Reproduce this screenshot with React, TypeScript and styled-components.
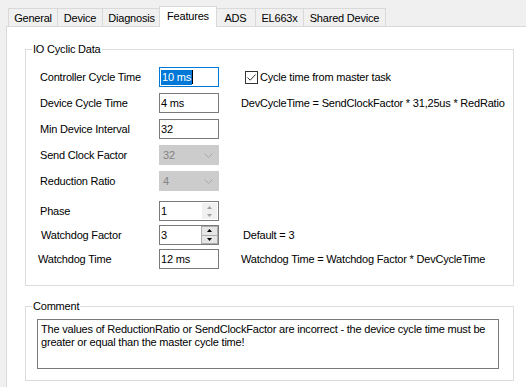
import styled, { createGlobalStyle } from 'styled-components';

const GlobalStyle = createGlobalStyle`
  html, body { margin: 0; padding: 0; }
  body {
    background: #f0f0f0;
    font-family: 'Liberation Sans', Arial, sans-serif;
    font-size: 11px;
    letter-spacing: -0.2px;
    color: #000;
  }
`;

const Window = styled.div`
  width: 526px;
  height: 387px;
  overflow: hidden;
  box-sizing: border-box;
  padding: 6px 0 0 6px;
  display: flex;
  flex-direction: column;
`;

const TabStrip = styled.div`
  display: flex;
  align-items: flex-end;
  height: 20px;
  padding-left: 2px;
`;

const Tab = styled.div<{ $w: number; $active?: boolean }>`
  position: relative;
  z-index: ${(p) => (p.$active ? 2 : 1)};
  box-sizing: border-box;
  width: ${(p) => (p.$active ? p.$w + 2 : p.$w)}px;
  height: ${(p) => (p.$active ? 21 : 18)}px;
  margin: ${(p) => (p.$active ? '0 -2px -1px -1px' : '0 -1px 0 0')};
  padding-bottom: ${(p) => (p.$active ? 3 : 0)}px;
  border: 1px solid #d9d9d9;
  border-bottom: none;
  background: ${(p) => (p.$active ? '#fff' : '#f0f0f0')};
  display: flex;
  align-items: center;
  justify-content: center;
  white-space: nowrap;
`;

const Panel = styled.div`
  flex: 1;
  background: #fff;
  border-top: 1px solid #d9d9d9;
  border-left: 1px solid #d9d9d9;
  padding: 16px 12px 0 18px;
  display: flex;
  flex-direction: column;
  gap: 14px;
`;

const Group = styled.fieldset<{ $pad: string }>`
  margin: 0;
  padding: ${(p) => p.$pad};
  border: 1px solid #dcdcdc;
  min-width: 0;
`;

const Legend = styled.legend`
  margin-left: 6px;
  padding: 0 1px;
  line-height: 13px;
`;

const Rows = styled.div`
  display: flex;
  flex-direction: column;
`;

const Row = styled.div<{ $gap: number }>`
  display: flex;
  align-items: center;
  height: 20px;
  margin-top: ${(p) => p.$gap}px;
`;

const Label = styled.span<{ $indent: number }>`
  flex: none;
  box-sizing: border-box;
  width: 133px;
  padding-left: ${(p) => p.$indent}px;
  white-space: nowrap;
`;

const TextBox = styled.div<{ $focused?: boolean }>`
  flex: none;
  box-sizing: border-box;
  width: 60px;
  height: 20px;
  border: 1px solid ${(p) => (p.$focused ? '#0078d7' : '#7a7a7a')};
  background: #fff;
  padding-left: 1px;
  display: flex;
  align-items: center;
`;

const Selected = styled.span`
  background: #0078d7;
  color: #fff;
  line-height: 15px;
  padding: 0 1px;
`;

const Caret = styled.span`
  width: 1px;
  height: 14px;
  background: #000;
`;

const Combo = styled.div`
  flex: none;
  box-sizing: border-box;
  width: 60px;
  height: 20px;
  border: 1px solid #cccccc;
  background: #cccccc;
  color: #838383;
  padding: 0 5px 0 3px;
  display: flex;
  align-items: center;
  justify-content: space-between;
`;

const Spin = styled.div`
  flex: none;
  box-sizing: border-box;
  width: 60px;
  height: 20px;
  border: 1px solid #7a7a7a;
  background: #fff;
  display: flex;
  align-items: stretch;
`;

const SpinValue = styled.span`
  flex: 1;
  padding-left: 1px;
  display: flex;
  align-items: center;
`;

const SpinButtons = styled.div<{ $enabled?: boolean }>`
  width: 17px;
  display: flex;
  flex-direction: column;
  gap: ${(p) => (p.$enabled ? 0 : 1)}px;
  padding: ${(p) => (p.$enabled ? 0 : 1)}px;
  box-sizing: border-box;
`;

const SpinButton = styled.div<{ $enabled?: boolean }>`
  flex: 1;
  display: flex;
  align-items: center;
  justify-content: center;
  background: ${(p) => (p.$enabled ? '#e5e5e5' : '#f0f0f0')};
  border: 1px solid ${(p) => (p.$enabled ? '#adadad' : '#f0f0f0')};
  color: ${(p) => (p.$enabled ? '#000' : '#a0a0a0')};
  & + & {
    margin-top: ${(p) => (p.$enabled ? -1 : 0)}px;
  }
`;

const Side = styled.div<{ $offset: number }>`
  margin-left: ${(p) => p.$offset}px;
  display: flex;
  align-items: center;
  gap: 2px;
  white-space: nowrap;
`;

const CheckBox = styled.span`
  box-sizing: border-box;
  width: 13px;
  height: 13px;
  border: 1px solid #333;
  background: #fff;
  display: flex;
  align-items: center;
  justify-content: center;
`;

const CommentBox = styled.div`
  box-sizing: border-box;
  margin: 6px 0 0 11px;
  width: 462px;
  height: 50px;
  border: 1px solid #7a7a7a;
  padding: 3px 2px 0 3px;
  line-height: 13px;
`;

const Chevron = () => (
  <svg width="9" height="5" viewBox="0 0 9 5">
    <path d="M0.5 0.5 L4.5 4.5 L8.5 0.5" fill="none" stroke="#a8a8a8" strokeWidth="1" />
  </svg>
);

const Arrow = ({ up }: { up?: boolean }) => (
  <svg width="5" height="3" viewBox="0 0 5 3">
    <path d={up ? 'M0 3 L2.5 0 L5 3 Z' : 'M0 0 L2.5 3 L5 0 Z'} fill="currentColor" />
  </svg>
);

const tabs = [
  { name: 'General', w: 50 },
  { name: 'Device', w: 46 },
  { name: 'Diagnosis', w: 59 },
  { name: 'Features', w: 56, active: true },
  { name: 'ADS', w: 41 },
  { name: 'EL663x', w: 49 },
  { name: 'Shared Device', w: 83 },
];

function SpinBox({ value, enabled }: { value: string; enabled?: boolean }) {
  return (
    <Spin>
      <SpinValue>{value}</SpinValue>
      <SpinButtons $enabled={enabled}>
        <SpinButton $enabled={enabled}>
          <Arrow up />
        </SpinButton>
        <SpinButton $enabled={enabled}>
          <Arrow />
        </SpinButton>
      </SpinButtons>
    </Spin>
  );
}

export default function App() {
  return (
    <>
      <GlobalStyle />
      <Window>
        <TabStrip>
          {tabs.map((t) => (
            <Tab key={t.name} $w={t.w} $active={t.active}>
              {t.name}
            </Tab>
          ))}
        </TabStrip>
        <Panel>
          <Group $pad="0 0 16px 0">
            <Legend>IO Cyclic Data</Legend>
            <Rows>
              <Row $gap={11}>
                <Label $indent={14}>Controller Cycle Time</Label>
                <TextBox $focused>
                  <Selected>10 ms</Selected>
                  <Caret />
                </TextBox>
                <Side $offset={26}>
                  <CheckBox>
                    <svg width="11" height="11" viewBox="0 0 11 11">
                      <path d="M1.5 5.5 L4.2 8.2 L9.5 2.5" fill="none" stroke="#333" strokeWidth="1" />
                    </svg>
                  </CheckBox>
                  Cycle time from master task
                </Side>
              </Row>
              <Row $gap={6}>
                <Label $indent={14}>Device Cycle Time</Label>
                <TextBox>4 ms</TextBox>
                <Side $offset={22}>DevCycleTime = SendClockFactor * 31,25us * RedRatio</Side>
              </Row>
              <Row $gap={6}>
                <Label $indent={14}>Min Device Interval</Label>
                <TextBox>32</TextBox>
              </Row>
              <Row $gap={6}>
                <Label $indent={14}>Send Clock Factor</Label>
                <Combo>
                  32
                  <Chevron />
                </Combo>
              </Row>
              <Row $gap={6}>
                <Label $indent={14}>Reduction Ratio</Label>
                <Combo>
                  4
                  <Chevron />
                </Combo>
              </Row>
              <Row $gap={10}>
                <Label $indent={14}>Phase</Label>
                <SpinBox value="1" />
              </Row>
              <Row $gap={4}>
                <Label $indent={15}>Watchdog Factor</Label>
                <SpinBox value="3" enabled />
                <Side $offset={24}>Default = 3</Side>
              </Row>
              <Row $gap={4}>
                <Label $indent={12}>Watchdog Time</Label>
                <TextBox>12 ms</TextBox>
                <Side $offset={22}>Watchdog Time = Watchdog Factor * DevCycleTime</Side>
              </Row>
            </Rows>
          </Group>
          <Group $pad="0 0 11px 0">
            <Legend>Comment</Legend>
            <CommentBox>
              The values of ReductionRatio or SendClockFactor are incorrect - the device cycle time must be
              greater or equal than the master cycle time!
            </CommentBox>
          </Group>
        </Panel>
      </Window>
    </>
  );
}
